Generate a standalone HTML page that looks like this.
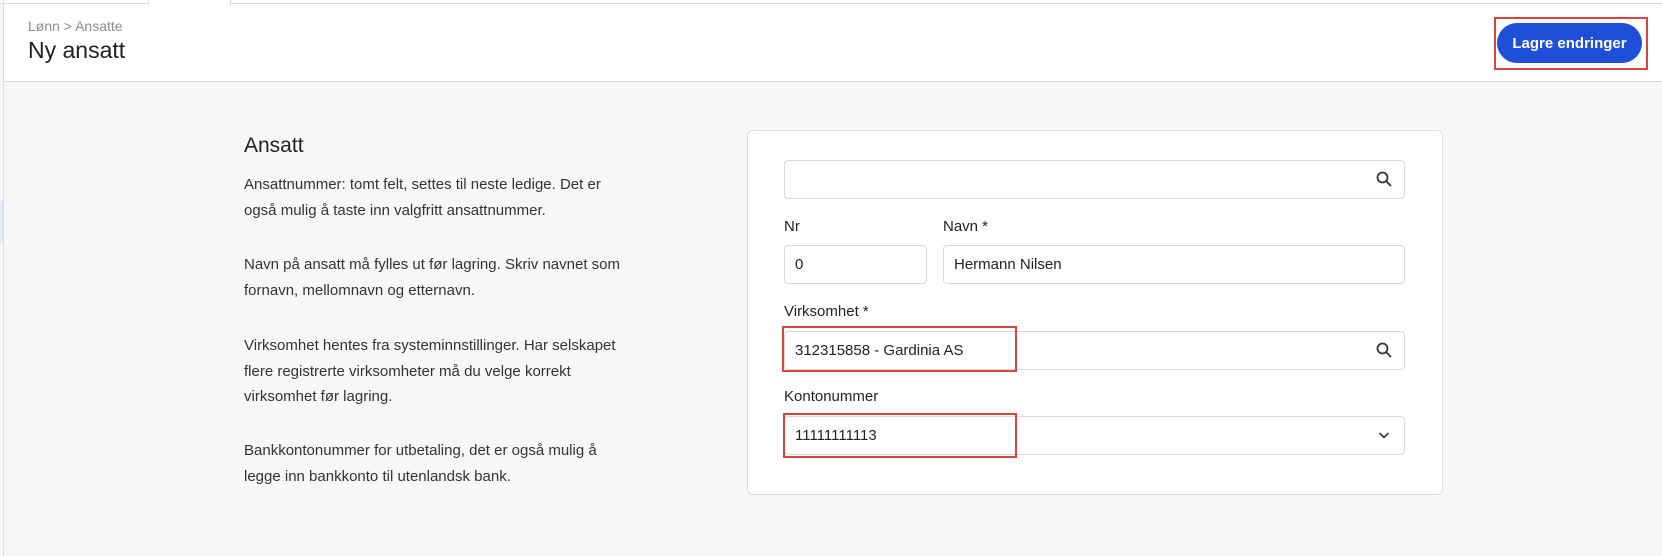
<!DOCTYPE html>
<html><head><meta charset="utf-8"><style>
*{box-sizing:border-box;margin:0;padding:0}
body{width:1662px;height:556px;overflow:hidden;background:#f6f7f9;font-family:"Liberation Sans",sans-serif;color:#222;position:relative}
.abs{position:absolute}
.top{left:0;top:0;width:1662px;height:4px;background:#fff;border-bottom:1px solid #ddd}
.tab{left:148px;top:0;width:83px;height:5px;background:#fff;border-left:1px solid #ddd;border-right:1px solid #ddd}
.hdr{left:3px;top:4px;width:1659px;height:78px;background:#fff;border-bottom:1px solid #dcdde0}
.vl{left:3px;top:0;width:1px;height:556px;background:#dcdde0}
.bc{left:28px;top:18px;font-size:14px;color:#8a8d93}
.tt{left:28px;top:37px;font-size:23px;color:#1e1f22}
.btn{left:1497px;top:23px;width:145px;height:40px;border-radius:20px;background:#1f4fd8;color:#fff;font-size:15px;font-weight:bold;display:flex;align-items:center;justify-content:center}
.red{border:2px solid #d9443f}
.h2{left:244px;top:134px;font-size:21px;color:#222}
.p{left:244px;font-size:15px;line-height:25.5px;color:#333}
.card{left:747px;top:130px;width:696px;height:365px;background:#fff;border:1px solid #dcdde0;border-radius:6px}
.in{background:#fff;border:1px solid #d6d8db;border-radius:4px;font-size:15px;color:#222;display:flex;align-items:center;padding-left:10px}
.lb{font-size:15px;color:#222}
</style></head><body>
<div class="abs top"></div><div class="abs hdr"></div><div class="abs tab"></div><div class="abs vl"></div>
<div class="abs" style="left:0;top:201px;width:3px;height:42px;background:#e3ebf8"></div>
<div class="abs bc">Lønn &gt; Ansatte</div>
<div class="abs tt">Ny ansatt</div>
<div class="abs red" style="left:1494px;top:17px;width:154px;height:53px"></div>
<div class="abs btn">Lagre endringer</div>
<div class="abs h2">Ansatt</div>
<div class="abs p" style="top:172px">Ansattnummer: tomt felt, settes til neste ledige. Det er<br>også mulig å taste inn valgfritt ansattnummer.</div>
<div class="abs p" style="top:252px">Navn på ansatt må fylles ut før lagring. Skriv navnet som<br>fornavn, mellomnavn og etternavn.</div>
<div class="abs p" style="top:333px">Virksomhet hentes fra systeminnstillinger. Har selskapet<br>flere registrerte virksomheter må du velge korrekt<br>virksomhet før lagring.</div>
<div class="abs p" style="top:438px">Bankkontonummer for utbetaling, det er også mulig å<br>legge inn bankkonto til utenlandsk bank.</div>
<div class="abs card"></div>
<div class="abs in" style="left:784px;top:160px;width:621px;height:39px"></div>
<svg class="abs" style="left:1375px;top:170px" width="18" height="18" viewBox="0 0 18 18"><circle cx="7.5" cy="7.5" r="5" fill="none" stroke="#333" stroke-width="1.8"/><path d="M11 11l4.5 4.5" stroke="#333" stroke-width="1.8" stroke-linecap="round"/></svg>
<div class="abs lb" style="left:784px;top:218px">Nr</div>
<div class="abs lb" style="left:943px;top:218px">Navn *</div>
<div class="abs in" style="left:784px;top:245px;width:143px;height:39px">0</div>
<div class="abs in" style="left:943px;top:245px;width:462px;height:39px">Hermann Nilsen</div>
<div class="abs lb" style="left:784px;top:303px">Virksomhet *</div>
<div class="abs in" style="left:784px;top:331px;width:621px;height:39px">312315858 - Gardinia AS</div>
<svg class="abs" style="left:1375px;top:341px" width="18" height="18" viewBox="0 0 18 18"><circle cx="7.5" cy="7.5" r="5" fill="none" stroke="#333" stroke-width="1.8"/><path d="M11 11l4.5 4.5" stroke="#333" stroke-width="1.8" stroke-linecap="round"/></svg>
<div class="abs red" style="left:782px;top:326px;width:235px;height:46px"></div>
<div class="abs lb" style="left:784px;top:388px">Kontonummer</div>
<div class="abs in" style="left:784px;top:416px;width:621px;height:39px">11111111113</div>
<svg class="abs" style="left:1378px;top:430px" width="12" height="10" viewBox="0 0 12 10"><path d="M1.5 3l4.5 4.5L10.5 3" fill="none" stroke="#333" stroke-width="1.6"/></svg>
<div class="abs red" style="left:783px;top:413px;width:234px;height:45px"></div>
</body></html>
